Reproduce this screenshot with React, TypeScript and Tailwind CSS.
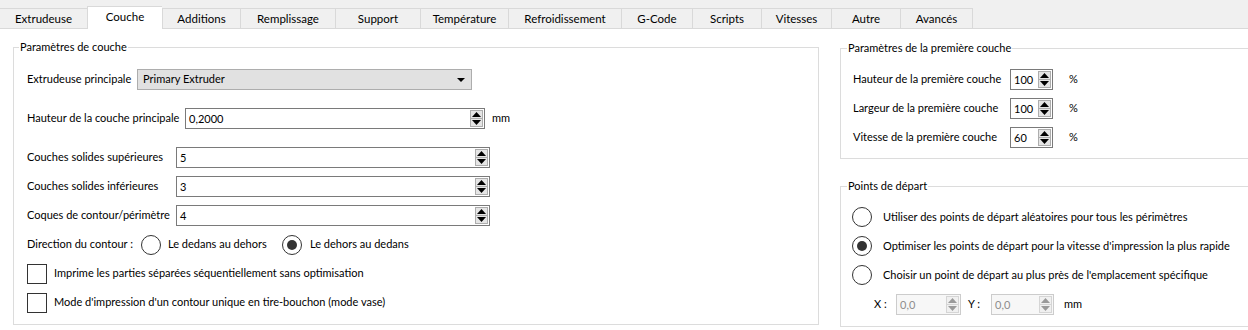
import React from 'react';
import clsx from 'clsx';

const tabs = [
  { label: 'Extrudeuse', w: 87 },
  { label: 'Couche', w: 75, active: true },
  { label: 'Additions', w: 78 },
  { label: 'Remplissage', w: 95 },
  { label: 'Support', w: 85 },
  { label: 'Température', w: 88 },
  { label: 'Refroidissement', w: 113 },
  { label: 'G-Code', w: 71 },
  { label: 'Scripts', w: 69 },
  { label: 'Vitesses', w: 70 },
  { label: 'Autre', w: 69 },
  { label: 'Avancés', w: 73 },
];

const SpinButtons: React.FC<{ disabled?: boolean }> = ({ disabled }) => {
  const fill = disabled ? '#9a9a9a' : '#000000';
  return (
    <div className="my-px mr-px flex w-[13px] flex-col">
      <div className={clsx('flex flex-1 items-center justify-center border', disabled ? 'border-[#d5d5d5] bg-[#f0f0f0]' : 'border-[#adadad] bg-[#e5e5e5]')}>
        <svg width="9" height="5" viewBox="0 0 9 5">
          <path d="M0 5 L4.5 0 L9 5 Z" fill={fill} />
        </svg>
      </div>
      <div className={clsx('flex flex-1 items-center justify-center border border-t-0', disabled ? 'border-[#d5d5d5] bg-[#f0f0f0]' : 'border-[#adadad] bg-[#e5e5e5]')}>
        <svg width="9" height="5" viewBox="0 0 9 5">
          <path d="M0 0 L9 0 L4.5 5 Z" fill={fill} />
        </svg>
      </div>
    </div>
  );
};

const SpinBox: React.FC<{ value: string; className?: string; disabled?: boolean }> = ({ value, className, disabled }) => (
  <div
    className={clsx(
      'flex h-[21px] shrink-0 items-stretch border',
      disabled ? 'border-[#cccccc] bg-[#f7f7f7] text-[#8d8d8d]' : 'border-[#7a7a7a] bg-white',
      className
    )}
  >
    <span className="flex-1 pl-[3px] leading-[19px]">{value}</span>
    <SpinButtons disabled={disabled} />
  </div>
);

const Radio: React.FC<{ checked?: boolean }> = ({ checked }) => (
  <span className="flex h-[20px] w-[20px] shrink-0 items-center justify-center rounded-full border border-[#333333] bg-white">
    {checked && <span className="h-[10px] w-[10px] rounded-full bg-[#333333]" />}
  </span>
);

const Checkbox: React.FC = () => (
  <span className="h-[20px] w-[20px] shrink-0 border border-[#333333] bg-white" />
);

const App: React.FC = () => {
  return (
    <div
      className="h-[330px] w-[1248px] overflow-hidden whitespace-nowrap bg-white text-[11px] text-black"
      style={{ fontFamily: '"Segoe UI", Lato, "Noto Sans", sans-serif' }}
    >
      {/* Tab bar */}
      <div className="flex h-[29px] items-end border-b border-[#d9d9d9] bg-[#f0f0f0] text-[11.5px]">
        {tabs.map((t, i) => (
          <div
            key={t.label}
            style={{ width: t.w }}
            className={clsx(
              'flex shrink-0 items-center justify-center border-t border-[#d9d9d9]',
              i === 0 ? '' : 'border-l',
              i === tabs.length - 1 && 'border-r',
              t.active ? '-mb-px h-[23px] bg-white pb-[3px]' : 'h-[20px] bg-[#f0f0f0]'
            )}
          >
            {t.label}
          </div>
        ))}
      </div>

      <div className="flex items-start">
        {/* Left group */}
        <fieldset className="ml-[13px] mt-[10px] h-[286px] w-[806px] shrink-0 border border-[#dcdcdc] px-[13px] pt-[14px]">
          <legend className="-ml-[8px] px-[1px] leading-[16px]">Paramètres de couche</legend>
          <div className="flex flex-col">
            <div className="flex h-[21px] items-center">
              <span className="w-[110px]">Extrudeuse principale</span>
              <div className="flex h-[21px] w-[335px] items-center justify-between border border-[#adadad] bg-[#e1e1e1] pl-[5px] pr-[6px]">
                <span>Primary Extruder</span>
                <svg width="8" height="4" viewBox="0 0 8 4">
                  <path d="M0 0 L8 0 L4 4 Z" fill="#000" />
                </svg>
              </div>
            </div>

            <div className="mt-[18px] flex h-[21px] items-center">
              <span className="w-[158px]">Hauteur de la couche principale</span>
              <SpinBox value="0,2000" className="w-[300px]" />
              <span className="ml-[7px]">mm</span>
            </div>

            <div className="mt-[18px] flex h-[21px] items-center">
              <span className="w-[149px]">Couches solides supérieures</span>
              <SpinBox value="5" className="w-[314px]" />
            </div>
            <div className="mt-[8px] flex h-[21px] items-center">
              <span className="w-[149px]">Couches solides inférieures</span>
              <SpinBox value="3" className="w-[314px]" />
            </div>
            <div className="mt-[8px] flex h-[21px] items-center">
              <span className="w-[149px]">Coques de contour/périmètre</span>
              <SpinBox value="4" className="w-[314px]" />
            </div>

            <div className="mt-[8px] flex h-[21px] items-center">
              <span className="w-[114px]">Direction du contour :</span>
              <Radio />
              <span className="ml-[7px] w-[114px]">Le dedans au dehors</span>
              <Radio checked />
              <span className="ml-[8px]">Le dehors au dedans</span>
            </div>

            <div className="mt-[8px] flex h-[21px] items-center gap-[7px]">
              <Checkbox />
              <span>Imprime les parties séparées séquentiellement sans optimisation</span>
            </div>
            <div className="mt-[8px] flex h-[21px] items-center gap-[7px]">
              <Checkbox />
              <span>Mode d'impression d'un contour unique en tire-bouchon (mode vase)</span>
            </div>
          </div>
        </fieldset>

        {/* Right column */}
        <div className="ml-[21px] flex shrink-0 flex-col">
          <fieldset className="mt-[11px] h-[119px] w-[420px] border border-[#dcdcdc] px-[12px] pt-[13px]">
            <legend className="-ml-[6px] px-[1px] leading-[16px]">Paramètres de la première couche</legend>
            <div className="flex flex-col gap-[8px]">
              {[
                ['Hauteur de la première couche', '100'],
                ['Largeur de la première couche', '100'],
                ['Vitesse de la première couche', '60'],
              ].map(([label, v]) => (
                <div key={label} className="flex h-[21px] items-center">
                  <span className="w-[157px]">{label}</span>
                  <SpinBox value={v} className="w-[43px]" />
                  <span className="ml-[16px]">%</span>
                </div>
              ))}
            </div>
          </fieldset>

          <fieldset className="mt-[19px] h-[149px] w-[420px] border border-[#dcdcdc] px-[11px] pt-[13px]">
            <legend className="-ml-[5px] px-[1px] leading-[16px]">Points de départ</legend>
            <div className="flex flex-col gap-[9px]">
              <div className="flex h-[20px] items-center gap-[11px]">
                <Radio />
                <span>Utiliser des points de départ aléatoires pour tous les périmètres</span>
              </div>
              <div className="flex h-[20px] items-center gap-[11px]">
                <Radio checked />
                <span>Optimiser les points de départ pour la vitesse d'impression la plus rapide</span>
              </div>
              <div className="flex h-[20px] items-center gap-[11px]">
                <Radio />
                <span>Choisir un point de départ au plus près de l'emplacement spécifique</span>
              </div>
              <div className="flex h-[21px] items-center pl-[22px]">
                <span className="w-[22px]">X :</span>
                <SpinBox value="0,0" disabled className="w-[65px]" />
                <span className="ml-[7px] w-[23px]">Y :</span>
                <SpinBox value="0,0" disabled className="w-[63px]" />
                <span className="ml-[10px]">mm</span>
              </div>
            </div>
          </fieldset>
        </div>
      </div>
    </div>
  );
};

export default App;
